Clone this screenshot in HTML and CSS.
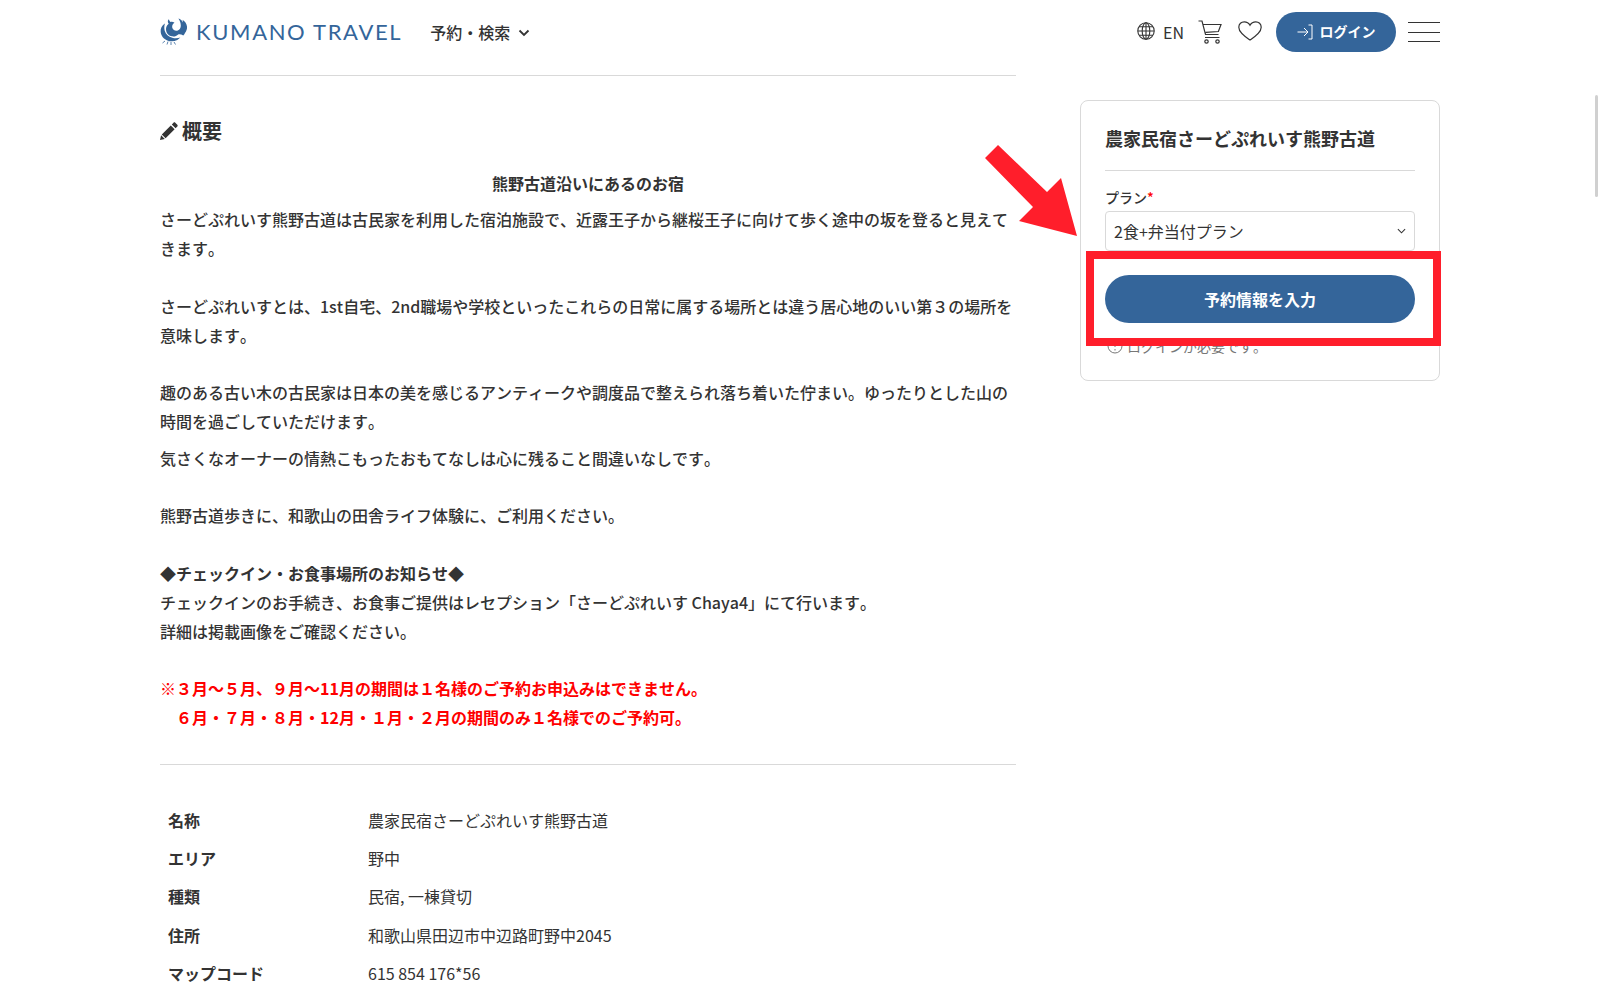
FILE: index.html
```html
<!DOCTYPE html>
<html lang="ja">
<head>
<meta charset="utf-8">
<title>農家民宿さーどぷれいす熊野古道</title>
<link rel="stylesheet" href="styles.css">
</head>
<body>
<div class="page">
  <header class="site-header">
    <a class="brand">
      <svg class="brand-mark" viewBox="0 0 28 28" aria-hidden="true">
        <path fill="#34659a" d="M8.500 1.500C7.500 3 7.700 4.500 8.700 5.700 6.300 7.500 5.600 10.300 6.200 13c.6 2.800 2.800 4.800 5.600 5.300 2.500.4 4.800-.3 6.400-1.900 1.800-.2 3.600.2 5.100 1 .8-.8 1.400-1.600 1.700-2.500 1.500-1.800 2.300-4 2-6.300-.3-3-2.200-5.500-4.600-6.900.5 1 .7 1.700.6 2.700-1-2-2.600-3.200-4.600-3.900 1.600 2.200 2.400 4.600 2.400 7.300 0 2.300-1.200 4-3 4.700-1.400.5-3 .3-4.200-.7-1.300-1-1.700-2.700-1.300-4.200.3-1.300 1.100-2.300 2.200-2.900-1.200-.9-2.600-1.100-3.900-.8-.9-.4-1.300-1.300-1.600-2.500z"/>
        <path fill="#34659a" d="M4.800 5.500C1.800 7.500.3 10.600.7 14c.4 3.900 3 7 6.600 8.400 3.300 1.300 7 1.100 10-.5 1.200-.6 2.100-1.400 3-2.300-2.500 .8-5.500 1-8 .1-3.700-1-6.600-3.500-7.600-7-.6-2.300-.5-4.600.1-6.700z"/>
        <path fill="none" stroke="#34659a" stroke-width=".8" d="M8 23.500l-1 3M11 24l0 3M14 24l1.500 2.500M5 23l-2.500 2"/>
      </svg>
      <span class="brand-name">KUMANO TRAVEL</span>
    </a>
    <nav class="main-nav">
      <span>予約・検索</span>
      <svg class="chev" viewBox="0 0 12 8" aria-hidden="true"><path d="M1.500 1.500L6 6l4.500-4.500"/></svg>
    </nav>
    <div class="tools">
      <span class="lang">
        <svg class="globe" viewBox="0 0 18 18" aria-hidden="true">
          <circle cx="9" cy="9" r="8.200"/><ellipse cx="9" cy="9" rx="3.800" ry="8.200"/><path d="M9 .8v16.400M.8 9h16.400M2 4.800h14M2 13.200h14"/>
        </svg>
        <span>EN</span>
      </span>
      <svg class="cart" viewBox="0 0 24 24" aria-hidden="true">
        <path d="M.5 1h3.500l3.500 13.500h13M5 4.500h18l-2.600 7-12.700 .8M7 17.500h14.500"/>
        <circle cx="8.500" cy="21.500" r="1.700"/><circle cx="19.500" cy="21.500" r="1.700"/>
      </svg>
      <svg class="heart" viewBox="0 0 24 20" aria-hidden="true">
        <path d="M12 19C7 15.500.8 11.500.8 6.200.8 3 3.300.8 6.200.8 8.600.8 10.800 2 12 4.200 13.200 2 15.400.8 17.800.8c2.900 0 5.400 2.200 5.400 5.400C23.200 11.500 17 15.500 12 19z"/>
      </svg>
      <a class="login">
        <svg class="login-icon" viewBox="0 0 16 16" aria-hidden="true"><path d="M.5 8h10M7 4l4 4-4 4M11.500 1H15v14h-3.500"/></svg>
        <span>ログイン</span>
      </a>
      <div class="burger"><i></i><i></i><i></i></div>
    </div>
  </header>

  <div class="layout">
    <main class="content">
      <h2 class="section-title">
        <svg class="pencil" viewBox="0 0 18 18" aria-hidden="true">
          <path d="M13.500.7c.5-.5 1.300-.5 1.800 0l2 2c.5.5.5 1.300 0 1.800l-1.700 1.700-3.800-3.800zM10.800 3.400l3.800 3.800-9 9-3.800-3.800zM1.100 13.200l3.700 3.700L0 18z"/>
        </svg>
        <span>概要</span>
      </h2>
      <p class="lead"><strong>熊野古道沿いにあるのお宿</strong></p>
      <p>さーどぷれいす熊野古道は古民家を利用した宿泊施設で、近露王子から継桜王子に向けて歩く途中の坂を登ると見えてきます。<br><br>さーどぷれいすとは、1st自宅、2nd職場や学校といったこれらの日常に属する場所とは違う居心地のいい第３の場所を意味します。<br><br>趣のある古い木の古民家は日本の美を感じるアンティークや調度品で整えられ落ち着いた佇まい。ゆったりとした山の時間を過ごしていただけます。</p>
      <p>気さくなオーナーの情熱こもったおもてなしは心に残ること間違いなしです。<br><br>熊野古道歩きに、和歌山の田舎ライフ体験に、ご利用ください。<br><br><strong>◆チェックイン・お食事場所のお知らせ◆</strong><br>チェックインのお手続き、お食事ご提供はレセプション「さーどぷれいす Chaya4」にて行います。<br>詳細は掲載画像をご確認ください。<br><br><strong class="alert">※３月～５月、９月～11月の期間は１名様のご予約お申込みはできません。<br>　６月・７月・８月・12月・１月・２月の期間のみ１名様でのご予約可。</strong></p>
      <table class="facts">
        <tr><th>名称</th><td>農家民宿さーどぷれいす熊野古道</td></tr>
        <tr><th>エリア</th><td>野中</td></tr>
        <tr><th>種類</th><td>民宿, 一棟貸切</td></tr>
        <tr><th>住所</th><td>和歌山県田辺市中辺路町野中2045</td></tr>
        <tr><th>マップコード</th><td>615 854 176*56</td></tr>
      </table>
    </main>

    <aside class="sidebar">
      <div class="card">
        <h3 class="card-title">農家民宿さーどぷれいす熊野古道</h3>
        <label class="field-label">プラン<span class="req">*</span></label>
        <div class="select">
          <span>2食+弁当付プラン</span>
          <svg class="select-chev" viewBox="0 0 10 6" aria-hidden="true"><path d="M1 1l4 4 4-4"/></svg>
        </div>
        <button class="cta">予約情報を入力</button>
        <p class="note">
          <svg class="info" viewBox="0 0 16 16" aria-hidden="true"><circle cx="8" cy="8" r="7"/><path d="M8 4v5M8 11v1.500"/></svg>
          <span>ログインが必要です。</span>
        </p>
      </div>
    </aside>
  </div>
</div>

<svg class="annotation" viewBox="0 0 1600 1000" aria-hidden="true">
  <polygon fill="#ff1e2b" points="985,158 998,145 1047,192 1061,178 1077,236 1019,221 1033,207"/>
</svg>
<div class="highlight"></div>
<div class="scroll-thumb"></div>
</body>
</html>
```
FILE: styles.css
```css
* { box-sizing: border-box; }
html, body { margin: 0; height: 1000px; overflow: hidden; background: #fff; }
body {
  font-family: "Noto Sans CJK JP", "Noto Sans", sans-serif;
  font-size: 16px;
  line-height: 1.8;
  color: #333;
  font-kerning: none;
}
.page { width: 1280px; margin: 0 auto; }

.site-header { display: flex; align-items: center; height: 64px; }
.brand { display: flex; align-items: center; gap: 8px; }
.brand-mark { width: 28px; height: 28px; display: block; }
.brand-name {
  font-family: Lato, sans-serif;
  font-size: 22px;
  font-weight: 400;
  letter-spacing: 1.650px;
  line-height: 1;
  color: #34659a;
  font-kerning: normal;
}
.main-nav { display: flex; align-items: center; gap: 8px; margin-left: 28px; font-weight: 500; }
.chev { width: 12px; height: 8px; margin-top: 2px; fill: none; stroke: #333; stroke-width: 1.800; }
.tools { display: flex; align-items: center; margin-left: auto; }
.lang { display: flex; align-items: center; gap: 8px; }
.globe { width: 18px; height: 18px; margin-bottom: 1px; fill: none; stroke: #333; stroke-width: 1.100; }
.cart { width: 24px; height: 24px; margin-left: 14px; fill: none; stroke: #333; stroke-width: 1.200; }
.heart { width: 24px; height: 20px; margin: 0 0 2px 16px; fill: none; stroke: #333; stroke-width: 1.200; }
.login {
  display: flex; align-items: center; justify-content: center; gap: 7px;
  width: 120px; height: 40px; margin-left: 14px;
  border-radius: 20px;
  background: #34659a;
  color: #fff;
  font-size: 14px;
  font-weight: 700;
}
.login-icon { width: 16px; height: 16px; fill: none; stroke: #fff; stroke-width: 1; }
.burger { display: flex; flex-direction: column; gap: 8.500px; width: 32px; margin-left: 12px; }
.burger i { display: block; height: 1px; background: #333; }

.layout { display: grid; grid-template-columns: 856px 360px; column-gap: 64px; align-items: start; margin-top: 11px; }
.content { border-top: 1px solid #d9d9d9; }
.section-title {
  display: flex; align-items: center; gap: 4px;
  margin: 37px 0 19.600px;
  font-size: 20px; font-weight: 700; line-height: 36px;
}
.pencil { width: 18px; height: 18px; fill: #333; }
.content p { margin: 0 0 8px; font-weight: 500; }
.content .lead { text-align: center; }
.content strong { font-weight: 700; }
.alert { color: #f00; }

.facts {
  width: 100%;
  margin-top: 32.400px;
  padding-top: 36px;
  border-top: 1px solid #d9d9d9;
  border-collapse: separate;
  border-spacing: 0;
}
.facts th { width: 200px; padding: 4.750px 8px; text-align: left; font-weight: 700; }
.facts td { padding: 4.750px 8px; font-weight: 400; }

.card {
  height: 281px;
  margin-top: 25px;
  padding: 24px;
  border: 1px solid #d9d9d9;
  border-radius: 8px;
}
.card-title {
  margin: 0 0 15px;
  padding-bottom: 18px;
  border-bottom: 1px solid #d9d9d9;
  font-size: 18px; font-weight: 700; line-height: 27px;
}
.field-label { display: block; font-size: 14px; font-weight: 500; line-height: 22px; }
.req { color: #f00; }
.select {
  display: flex; align-items: center; justify-content: space-between;
  height: 40px; padding: 0 8px; margin-top: 3px;
  border: 1px solid #d9d9d9; border-radius: 4px;
}
.select-chev { width: 9px; height: 6px; fill: none; stroke: #333; stroke-width: 1.200; }
.cta {
  display: block; width: 100%; height: 48px;
  margin-top: 24px;
  border: 0; border-radius: 24px;
  background: #34659a; color: #fff;
  font: 700 16px/1.8 "Noto Sans CJK JP", sans-serif;
}
.note { display: flex; align-items: center; gap: 4px; margin: 12px 0 0 2px; font-size: 14px; color: #777; line-height: 22px; }
.info { width: 16px; height: 16px; fill: none; stroke: #777; stroke-width: 1; }

.annotation { position: absolute; left: 0; top: 0; width: 1600px; height: 1000px; pointer-events: none; }
.highlight { position: absolute; left: 1086px; top: 251px; width: 355px; height: 95px; border: 8px solid #ff1e2b; }
.scroll-thumb { position: absolute; right: 2px; top: 95px; width: 3px; height: 102px; border-radius: 2px; background: #d0d0d0; }
```
